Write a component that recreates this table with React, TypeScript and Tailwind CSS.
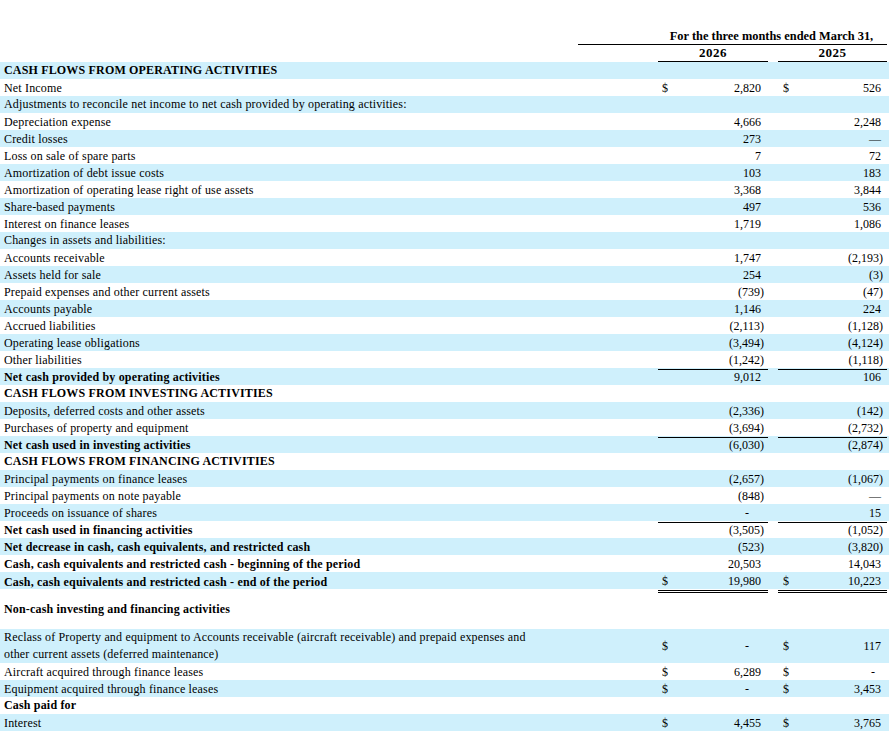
import React from "react";

type Row = {
  label: React.ReactNode;
  bold?: boolean;
  band?: boolean;
  v1?: string;
  v2?: string;
  d1?: boolean;
  d2?: boolean;
  line?: "single" | "double";
  h?: number;
};

const rows: Row[] = [
  { label: "CASH FLOWS FROM OPERATING ACTIVITIES", bold: true },
  { label: "Net Income", v1: "2,820", v2: "526", d1: true, d2: true },
  { label: "Adjustments to reconcile net income to net cash provided by operating activities:" },
  { label: "Depreciation expense", v1: "4,666", v2: "2,248" },
  { label: "Credit losses", v1: "273", v2: "—" },
  { label: "Loss on sale of spare parts", v1: "7", v2: "72" },
  { label: "Amortization of debt issue costs", v1: "103", v2: "183" },
  { label: "Amortization of operating lease right of use assets", v1: "3,368", v2: "3,844" },
  { label: "Share-based payments", v1: "497", v2: "536" },
  { label: "Interest on finance leases", v1: "1,719", v2: "1,086" },
  { label: "Changes in assets and liabilities:" },
  { label: "Accounts receivable", v1: "1,747", v2: "(2,193)" },
  { label: "Assets held for sale", v1: "254", v2: "(3)" },
  { label: "Prepaid expenses and other current assets", v1: "(739)", v2: "(47)" },
  { label: "Accounts payable", v1: "1,146", v2: "224" },
  { label: "Accrued liabilities", v1: "(2,113)", v2: "(1,128)" },
  { label: "Operating lease obligations", v1: "(3,494)", v2: "(4,124)" },
  { label: "Other liabilities", v1: "(1,242)", v2: "(1,118)", line: "single" },
  { label: "Net cash provided by operating activities", bold: true, v1: "9,012", v2: "106" },
  { label: "CASH FLOWS FROM INVESTING ACTIVITIES", bold: true },
  { label: "Deposits, deferred costs and other assets", v1: "(2,336)", v2: "(142)" },
  { label: "Purchases of property and equipment", v1: "(3,694)", v2: "(2,732)", line: "single" },
  { label: "Net cash used in investing activities", bold: true, v1: "(6,030)", v2: "(2,874)" },
  { label: "CASH FLOWS FROM FINANCING ACTIVITIES", bold: true },
  { label: "Principal payments on finance leases", v1: "(2,657)", v2: "(1,067)" },
  { label: "Principal payments on note payable", v1: "(848)", v2: "—" },
  { label: "Proceeds on issuance of shares", v1: "-", v2: "15", line: "single" },
  { label: "Net cash used in financing activities", bold: true, v1: "(3,505)", v2: "(1,052)" },
  { label: "Net decrease in cash, cash equivalents, and restricted cash", bold: true, v1: "(523)", v2: "(3,820)" },
  { label: "Cash, cash equivalents and restricted cash - beginning of the period", bold: true, v1: "20,503", v2: "14,043" },
  { label: "Cash, cash equivalents and restricted cash - end of the period", bold: true, v1: "19,980", v2: "10,223", d1: true, d2: true, line: "double" },
];

const rows2: Row[] = [
  { label: "Non-cash investing and financing activities", bold: true, h: 40, band: false },
  {
    label: (
      <>
        Reclass of Property and equipment to Accounts receivable (aircraft receivable) and prepaid expenses and
        <br />
        other current assets (deferred maintenance)
      </>
    ),
    h: 34,
    band: true,
    v1: "-",
    v2: "117",
    d1: true,
    d2: true,
  },
  { label: "Aircraft acquired through finance leases", v1: "6,289", v2: "-", d1: true, d2: true, band: false },
  { label: "Equipment acquired through finance leases", v1: "-", v2: "3,453", d1: true, d2: true, band: true },
  { label: "Cash paid for", bold: true, band: false },
  { label: "Interest", v1: "4,455", v2: "3,765", d1: true, d2: true, band: true },
];

function valPad(v: string | undefined, col: 1 | 2) {
  if (!v) return "";
  if (v === "-") return col === 1 ? "pr-[19px]" : "pr-[12px]";
  if (v.endsWith(")")) return "pr-[4px]";
  return col === 1 ? "pr-[7px]" : "pr-[6px]";
}

function ValueCell({ v, d, line, col }: { v?: string; d?: boolean; line?: "single" | "double"; col: 1 | 2 }) {
  const border =
    line === "single"
      ? "border-b border-black"
      : line === "double"
      ? "border-b-[3px] border-double border-black"
      : "";
  return (
    <div className={`flex items-center justify-between ${col === 1 ? "pl-[4px]" : "pl-[5px]"} ${valPad(v, col)} ${border}`}>
      <span>{d ? "$" : ""}</span>
      <span>{v ?? ""}</span>
    </div>
  );
}

function TableRow({ r, band }: { r: Row; band: boolean }) {
  const h = r.h ?? 17;
  return (
    <div
      className={`grid grid-cols-[658px_110px_10px_109px_2px] ${band ? "bg-[#cff0fc]" : "bg-white"}`}
      style={{ height: h }}
    >
      <div className={`flex items-center pl-[4px] leading-[17px] tracking-[0.17px] ${r.bold ? "font-bold" : ""}`}>
        <div>{r.label}</div>
      </div>
      <ValueCell v={r.v1} d={r.d1} line={r.line} col={1} />
      <div />
      <ValueCell v={r.v2} d={r.d2} line={r.line} col={2} />
      <div />
    </div>
  );
}

export default function App() {
  return (
    <div
      className="w-[889px] h-[732px] bg-white text-black text-[12px] overflow-hidden"
      style={{ fontFamily: '"Liberation Serif", "Times New Roman", serif' }}
    >
      <div className="pt-[28px]">
        <div className="flex h-[17px]">
          <div className="w-[578px]" />
          <div className="w-[309px] flex border-b border-black">
            <div className="w-[78px]" />
            <div className="flex-1 text-center font-bold text-[12.4px] leading-[16px]">For the three months ended March 31,</div>
          </div>
        </div>
        <div className="grid grid-cols-[658px_110px_10px_109px_2px] h-[17px] font-bold text-[13px] tracking-[0.5px]">
          <div />
          <div className="text-center border-b border-black leading-[16px]">2026</div>
          <div />
          <div className="text-center border-b border-black leading-[16px]">2025</div>
          <div />
        </div>
        {rows.map((r, i) => (
          <TableRow key={i} r={r} band={i % 2 === 0} />
        ))}
        {rows2.map((r, i) => (
          <TableRow key={"b" + i} r={r} band={!!r.band} />
        ))}
      </div>
    </div>
  );
}
